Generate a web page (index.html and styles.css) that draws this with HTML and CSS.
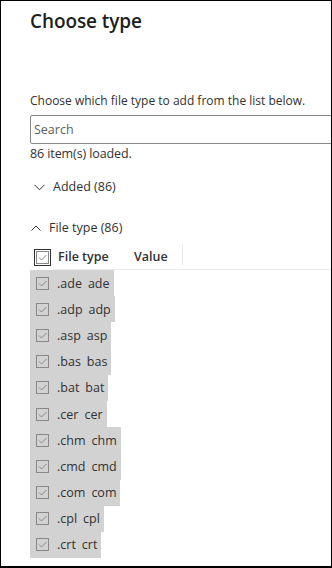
FILE: index.html
```html
<!DOCTYPE html>
<html lang="en">
<head>
    <meta charset="UTF-8">
    <title>Choose type</title>
    <link rel="stylesheet" href="styles.css">
</head>
<body>
    <div class="panel">
        <h1 class="title">Choose type</h1>
        <p class="description">Choose which file type to add from the list below.</p>
        <input class="search" type="text" placeholder="Search">
        <div class="count">86 item(s) loaded.</div>

        <div class="group group-added">
            <svg class="chevron" width="11" height="7" viewBox="0 0 11 7"><path d="M0.5 0.8 L5.5 5.8 L10.5 0.8" fill="none" stroke="#323130" stroke-width="1"/></svg>
            <span>Added (86)</span>
        </div>

        <div class="group group-type">
            <svg class="chevron" width="10" height="6" viewBox="0 0 10 6"><path d="M0.5 5.5 L5 1 L9.5 5.5" fill="none" stroke="#323130" stroke-width="1"/></svg>
            <span>File type (86)</span>
        </div>

        <div class="list-header">
            <div class="check-cell">
                <span class="check-focus">
                    <span class="check-box">
                        <svg width="9" height="7" viewBox="0 0 9 7"><path d="M1 3.5 L3.5 6 L8.5 1" fill="none" stroke="#8a8886" stroke-width="1"/></svg>
                    </span>
                </span>
            </div>
            <div class="col col-type">File type</div>
            <div class="col col-value">Value</div>
            <div class="col-rest"></div>
        </div>

        <div class="rows" id="rows"></div>
    </div>

    <script>
        const types = ['ade', 'adp', 'asp', 'bas', 'bat', 'cer', 'chm', 'cmd', 'com', 'cpl', 'crt'];

        const rowsHTML = types.map(t => `
            <div class="row">
                <span class="check-box">
                    <svg width="9" height="7" viewBox="0 0 9 7"><path d="M1 3.5 L3.5 6 L8.5 1" fill="none" stroke="#8a8886" stroke-width="1"/></svg>
                </span>
                <span class="cell">.${t}</span>
                <span class="cell">${t}</span>
            </div>
        `).join('');

        document.getElementById('rows').innerHTML = rowsHTML;
    </script>
</body>
</html>
```

FILE: styles.css
```css
* {
    margin: 0;
    padding: 0;
    box-sizing: border-box;
}

html, body {
    width: 332px;
    height: 568px;
    overflow: hidden;
}

body {
    font-family: 'Open Sans', 'Noto Sans', sans-serif;
    background: white;
    color: #323130;
}

.panel {
    width: 332px;
    height: 568px;
    border: 1px solid #000;
    border-bottom-width: 2px;
    padding-left: 29px;
    overflow: hidden;
}

.title {
    font-size: 19px;
    font-weight: 600;
    color: #201f1e;
    line-height: 28px;
    margin-top: 6px;
    letter-spacing: -0.1px;
}

.description {
    font-size: 12px;
    line-height: 18px;
    margin-top: 57px;
}

.search {
    display: block;
    width: 320px;
    height: 29px;
    margin-top: 5px;
    border: 1px solid #8a8886;
    border-radius: 2px;
    padding: 0 3px;
    font-family: inherit;
    font-size: 12.5px;
    color: #323130;
    outline: none;
}

.search::placeholder {
    color: #605e5c;
}

.count {
    font-size: 12.5px;
    line-height: 18px;
    margin-top: 1px;
    letter-spacing: -0.1px;
}

.group {
    display: flex;
    align-items: center;
    font-size: 12.5px;
    line-height: 18px;
}

.group-added {
    margin-top: 15px;
    padding-left: 4px;
    gap: 8px;
}

.group-type {
    margin-top: 23px;
    padding-left: 1px;
    gap: 8px;
}

.list-header {
    display: flex;
    align-items: stretch;
    height: 26px;
    margin-top: 7px;
    font-size: 12.5px;
    font-weight: 600;
}

.check-cell {
    width: 23px;
    display: flex;
    align-items: center;
    padding-left: 4px;
}

.check-focus {
    display: flex;
    align-items: center;
    justify-content: center;
    width: 17px;
    height: 17px;
    border: 1px solid #323130;
}

.col {
    display: flex;
    align-items: center;
    border-bottom: 1px solid #edebe9;
    padding-left: 5px;
}

.col-type {
    width: 76px;
}

.col-value {
    width: 54px;
    position: relative;
}

.col-value::after {
    content: '';
    position: absolute;
    right: 0;
    top: 0;
    bottom: 4px;
    width: 1px;
    background: #edebe9;
}

.col-rest {
    flex: 1;
    border-bottom: 1px solid #edebe9;
}

.check-box {
    display: flex;
    align-items: center;
    justify-content: center;
    width: 13px;
    height: 13px;
    border: 1px solid #8a8886;
    flex-shrink: 0;
}

.rows {
    display: flex;
    flex-direction: column;
    align-items: flex-start;
}

.row {
    display: flex;
    align-items: center;
    height: 26.2px;
    background: #d2d2d2;
    padding: 0 4px 0 6px;
    font-size: 12.5px;
    gap: 6px;
}

.row .check-box {
    margin-right: 2px;
}
```
